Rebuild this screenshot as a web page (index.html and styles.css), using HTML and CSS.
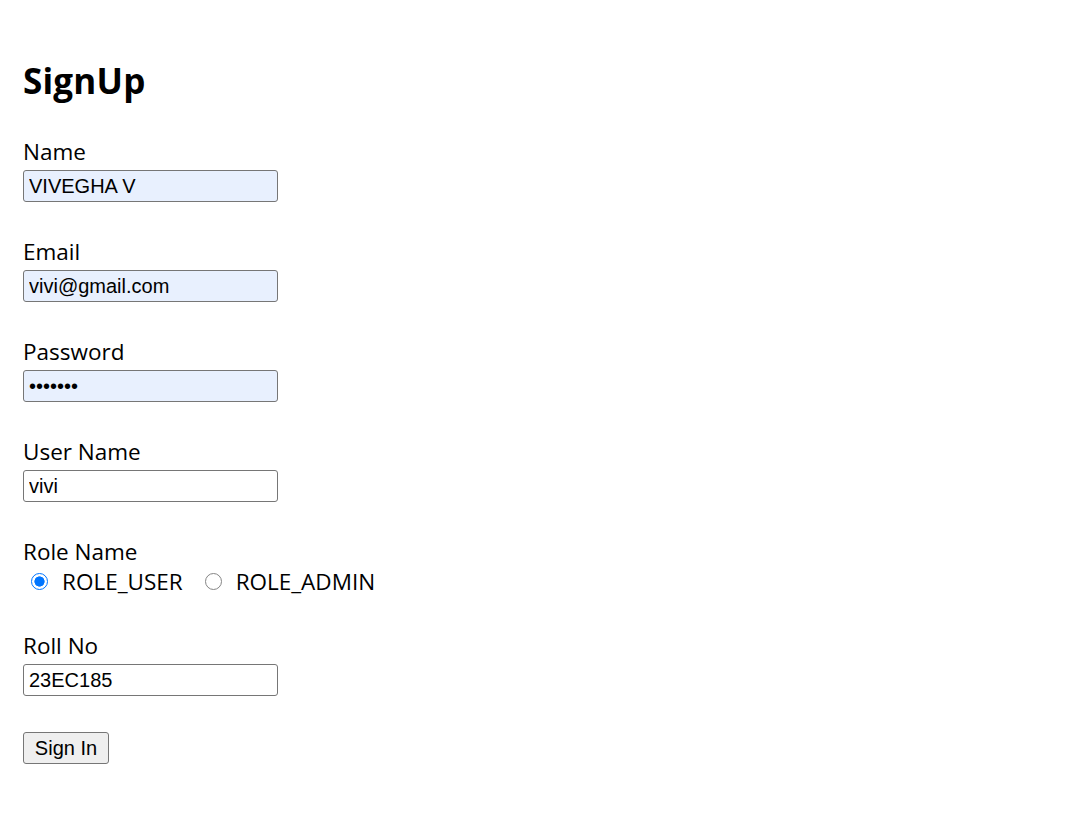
FILE: index.html
```html
<!DOCTYPE html>
<html>
<head>
<meta charset="utf-8">
<link rel="stylesheet" href="styles.css">
</head>
<body>
<div class="page">
  <h2 class="title">SignUp</h2>
  <form class="form">
    <div class="field">
      <label class="label">Name</label>
      <input class="input filled" type="text" value="VIVEGHA V">
    </div>
    <div class="field">
      <label class="label">Email</label>
      <input class="input filled" type="text" value="vivi@gmail.com">
    </div>
    <div class="field">
      <label class="label">Password</label>
      <input class="input filled" type="password" value="vivi123">
    </div>
    <div class="field">
      <label class="label">User Name</label>
      <input class="input" type="text" value="vivi">
    </div>
    <div class="field">
      <label class="label">Role Name</label>
      <div class="radios">
        <label class="radio-opt"><input class="radio" type="radio" name="role" checked><span>ROLE_USER</span></label>
        <label class="radio-opt"><input class="radio" type="radio" name="role"><span>ROLE_ADMIN</span></label>
      </div>
    </div>
    <div class="field">
      <label class="label">Roll No</label>
      <input class="input" type="text" value="23EC185">
    </div>
    <button class="btn" type="button">Sign In</button>
  </form>
</div>
</body>
</html>
```

FILE: styles.css
```css
html, body {
  margin: 0;
  padding: 0;
  background: #ffffff;
}
.page {
  padding: 57px 0 0 23px;
  font-family: "Open Sans", "Noto Sans", sans-serif;
  color: #000;
}
.title {
  margin: 0 0 35px 0;
  font-size: 35px;
  line-height: 48px;
  font-weight: 700;
  letter-spacing: 0.2px;
}
.form {
  display: flex;
  flex-direction: column;
  align-items: flex-start;
}
.field {
  display: flex;
  flex-direction: column;
  align-items: flex-start;
  margin-bottom: 38px;
}
.label {
  font-size: 22.5px;
  line-height: 24px;
  height: 24px;
  margin-bottom: 6px;
}
.input {
  box-sizing: border-box;
  width: 255px;
  height: 32px;
  margin: 0;
  padding: 0 5px;
  border: 1px solid #767676;
  border-radius: 3px;
  background: #ffffff;
  font-family: "Liberation Sans", Arial, sans-serif;
  font-size: 20px;
  color: #000;
}
.input.filled {
  background: #e8f0fe;
}
.input[type="password"] {
  font-size: 20px;
}
.radios {
  display: flex;
  align-items: center;
  height: 29px;
  margin-top: -3px;
}
.radio-opt {
  display: flex;
  align-items: center;
  font-size: 22.5px;
  line-height: 28px;
  margin-right: 14px;
}
.radio-opt:last-child {
  margin-right: 0;
}
.radio {
  appearance: none;
  -webkit-appearance: none;
  box-sizing: border-box;
  width: 17px;
  height: 17px;
  margin: 0 14px 0 8px;
  border: 1.5px solid #858585;
  border-radius: 50%;
  background: #fff;
  flex: none;
}
.radio:checked {
  border: 1.5px solid #0075ff;
  background: radial-gradient(circle, #0075ff 0, #0075ff 4.8px, #ffffff 5.4px);
}
.btn {
  box-sizing: border-box;
  height: 32px;
  width: 86px;
  margin-top: -2px;
  padding: 0;
  border: 1px solid #767676;
  border-radius: 3px;
  background: #efefef;
  font-family: "Liberation Sans", Arial, sans-serif;
  font-size: 20px;
  color: #000;
}
```
